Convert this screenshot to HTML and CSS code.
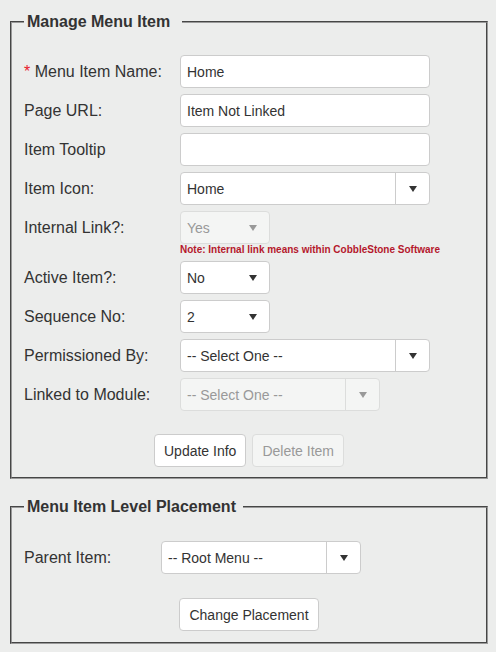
FILE: index.html
```html
<!DOCTYPE html>
<html>
<head>
<meta charset="utf-8">
<link rel="stylesheet" href="styles.css">
</head>
<body>
<fieldset class="panel panel-item">
  <legend class="legend-wide">Manage Menu Item</legend>
  <div class="row">
    <div class="lbl"><span class="req">*</span> Menu Item Name:</div>
    <div class="input">Home</div>
  </div>
  <div class="row">
    <div class="lbl">Page URL:</div>
    <div class="input">Item Not Linked</div>
  </div>
  <div class="row">
    <div class="lbl">Item Tooltip</div>
    <div class="input"></div>
  </div>
  <div class="row">
    <div class="lbl">Item Icon:</div>
    <div class="select w250">
      <span class="sel-text">Home</span>
      <span class="sel-btn split"><svg width="8" height="6" viewBox="0 0 8 6"><polygon points="0,0 8,0 4,6"/></svg></span>
    </div>
  </div>
  <div class="row">
    <div class="lbl">Internal Link?:</div>
    <div class="field">
      <div class="select w90 disabled">
        <span class="sel-text">Yes</span>
        <span class="sel-btn"><svg width="8" height="6" viewBox="0 0 8 6"><polygon points="0,0 8,0 4,6"/></svg></span>
      </div>
      <div class="note">Note: Internal link means within CobbleStone Software</div>
    </div>
  </div>
  <div class="row">
    <div class="lbl">Active Item?:</div>
    <div class="select w90">
      <span class="sel-text">No</span>
      <span class="sel-btn"><svg width="8" height="6" viewBox="0 0 8 6"><polygon points="0,0 8,0 4,6"/></svg></span>
    </div>
  </div>
  <div class="row">
    <div class="lbl">Sequence No:</div>
    <div class="select w90">
      <span class="sel-text">2</span>
      <span class="sel-btn"><svg width="8" height="6" viewBox="0 0 8 6"><polygon points="0,0 8,0 4,6"/></svg></span>
    </div>
  </div>
  <div class="row">
    <div class="lbl">Permissioned By:</div>
    <div class="select w250">
      <span class="sel-text">-- Select One --</span>
      <span class="sel-btn split"><svg width="8" height="6" viewBox="0 0 8 6"><polygon points="0,0 8,0 4,6"/></svg></span>
    </div>
  </div>
  <div class="row">
    <div class="lbl">Linked to Module:</div>
    <div class="select w200 disabled">
      <span class="sel-text">-- Select One --</span>
      <span class="sel-btn split"><svg width="8" height="6" viewBox="0 0 8 6"><polygon points="0,0 8,0 4,6"/></svg></span>
    </div>
  </div>
  <div class="actions">
    <button class="btn">Update Info</button>
    <button class="btn btn-disabled">Delete Item</button>
  </div>
</fieldset>

<fieldset class="panel panel-place">
  <legend>Menu Item Level Placement</legend>
  <div class="row">
    <div class="lbl lbl-short">Parent Item:</div>
    <div class="select w200">
      <span class="sel-text">-- Root Menu --</span>
      <span class="sel-btn split"><svg width="8" height="6" viewBox="0 0 8 6"><polygon points="0,0 8,0 4,6"/></svg></span>
    </div>
  </div>
  <div class="actions actions-place">
    <button class="btn">Change Placement</button>
  </div>
</fieldset>
</body>
</html>
```

FILE: styles.css
```css
html, body {
  margin: 0;
  padding: 0;
}
body {
  background: #ecedec;
  font-family: "Liberation Sans", Arial, sans-serif;
  color: #333;
  width: 496px;
}
.panel {
  margin: 0 8px 0 10px;
  border: 2px groove #9a9a9a;
  padding: 24px 12px 10px 12px;
  min-width: 0;
}
.panel-item {
  margin-top: 13px;
}
.panel-place {
  margin-top: 19px;
  padding-top: 25px;
  padding-bottom: 11px;
}
.panel legend {
  padding: 0 7px 0 3px;
  font-size: 16px;
  font-weight: bold;
  line-height: 18px;
  color: #333;
}
.panel legend.legend-wide {
  padding-right: 12px;
}
.row {
  display: flex;
  align-items: flex-start;
  margin-bottom: 6px;
}
.lbl {
  width: 156px;
  flex: none;
  font-size: 16px;
  line-height: 32px;
  padding-top: 1px;
  color: #333;
  white-space: nowrap;
}
.lbl-short {
  width: 137px;
}
.req {
  color: #e8202a;
}
.input {
  width: 250px;
  height: 33px;
  box-sizing: border-box;
  border: 1px solid #ccc;
  border-radius: 4px;
  background: #fff;
  padding: 1px 6px 0;
  font-size: 14px;
  line-height: 30px;
  color: #333;
}
.field {
  display: flex;
  flex-direction: column;
}
.select {
  display: flex;
  height: 33px;
  box-sizing: border-box;
  border: 1px solid #ccc;
  border-radius: 4px;
  background: #fff;
  font-size: 14px;
  line-height: 32px;
  color: #333;
}
.w250 { width: 250px; }
.w200 { width: 200px; }
.w90 { width: 90px; }
.sel-text {
  flex: 1;
  padding-left: 6px;
  white-space: nowrap;
  overflow: hidden;
}
.sel-btn {
  width: 33px;
  flex: none;
  display: flex;
  align-items: center;
  justify-content: center;
}
.sel-btn.split {
  border-left: 1px solid #ccc;
}
.sel-btn svg {
  fill: #333;
}
.select.disabled {
  background: #f4f5f4;
  border-color: #dcdddc;
  color: #999;
}
.select.disabled .sel-btn.split {
  border-left-color: #dcdddc;
}
.select.disabled .sel-btn svg {
  fill: #999;
}
.note {
  font-size: 10px;
  font-weight: bold;
  line-height: 10px;
  padding-top: 1px;
  color: #b5182c;
  white-space: nowrap;
}
.actions {
  display: flex;
  justify-content: center;
  gap: 6px;
  margin-top: 23px;
}
.actions-place {
  margin-top: 24px;
}
.btn {
  height: 33px;
  box-sizing: border-box;
  padding: 1px 9px 0;
  border: 1px solid #ccc;
  border-radius: 4px;
  background: #fff;
  font-family: "Liberation Sans", Arial, sans-serif;
  font-size: 14px;
  color: #333;
}
.btn-disabled {
  background: #f4f5f4;
  border-color: #dcdddc;
  color: #999;
}
```
